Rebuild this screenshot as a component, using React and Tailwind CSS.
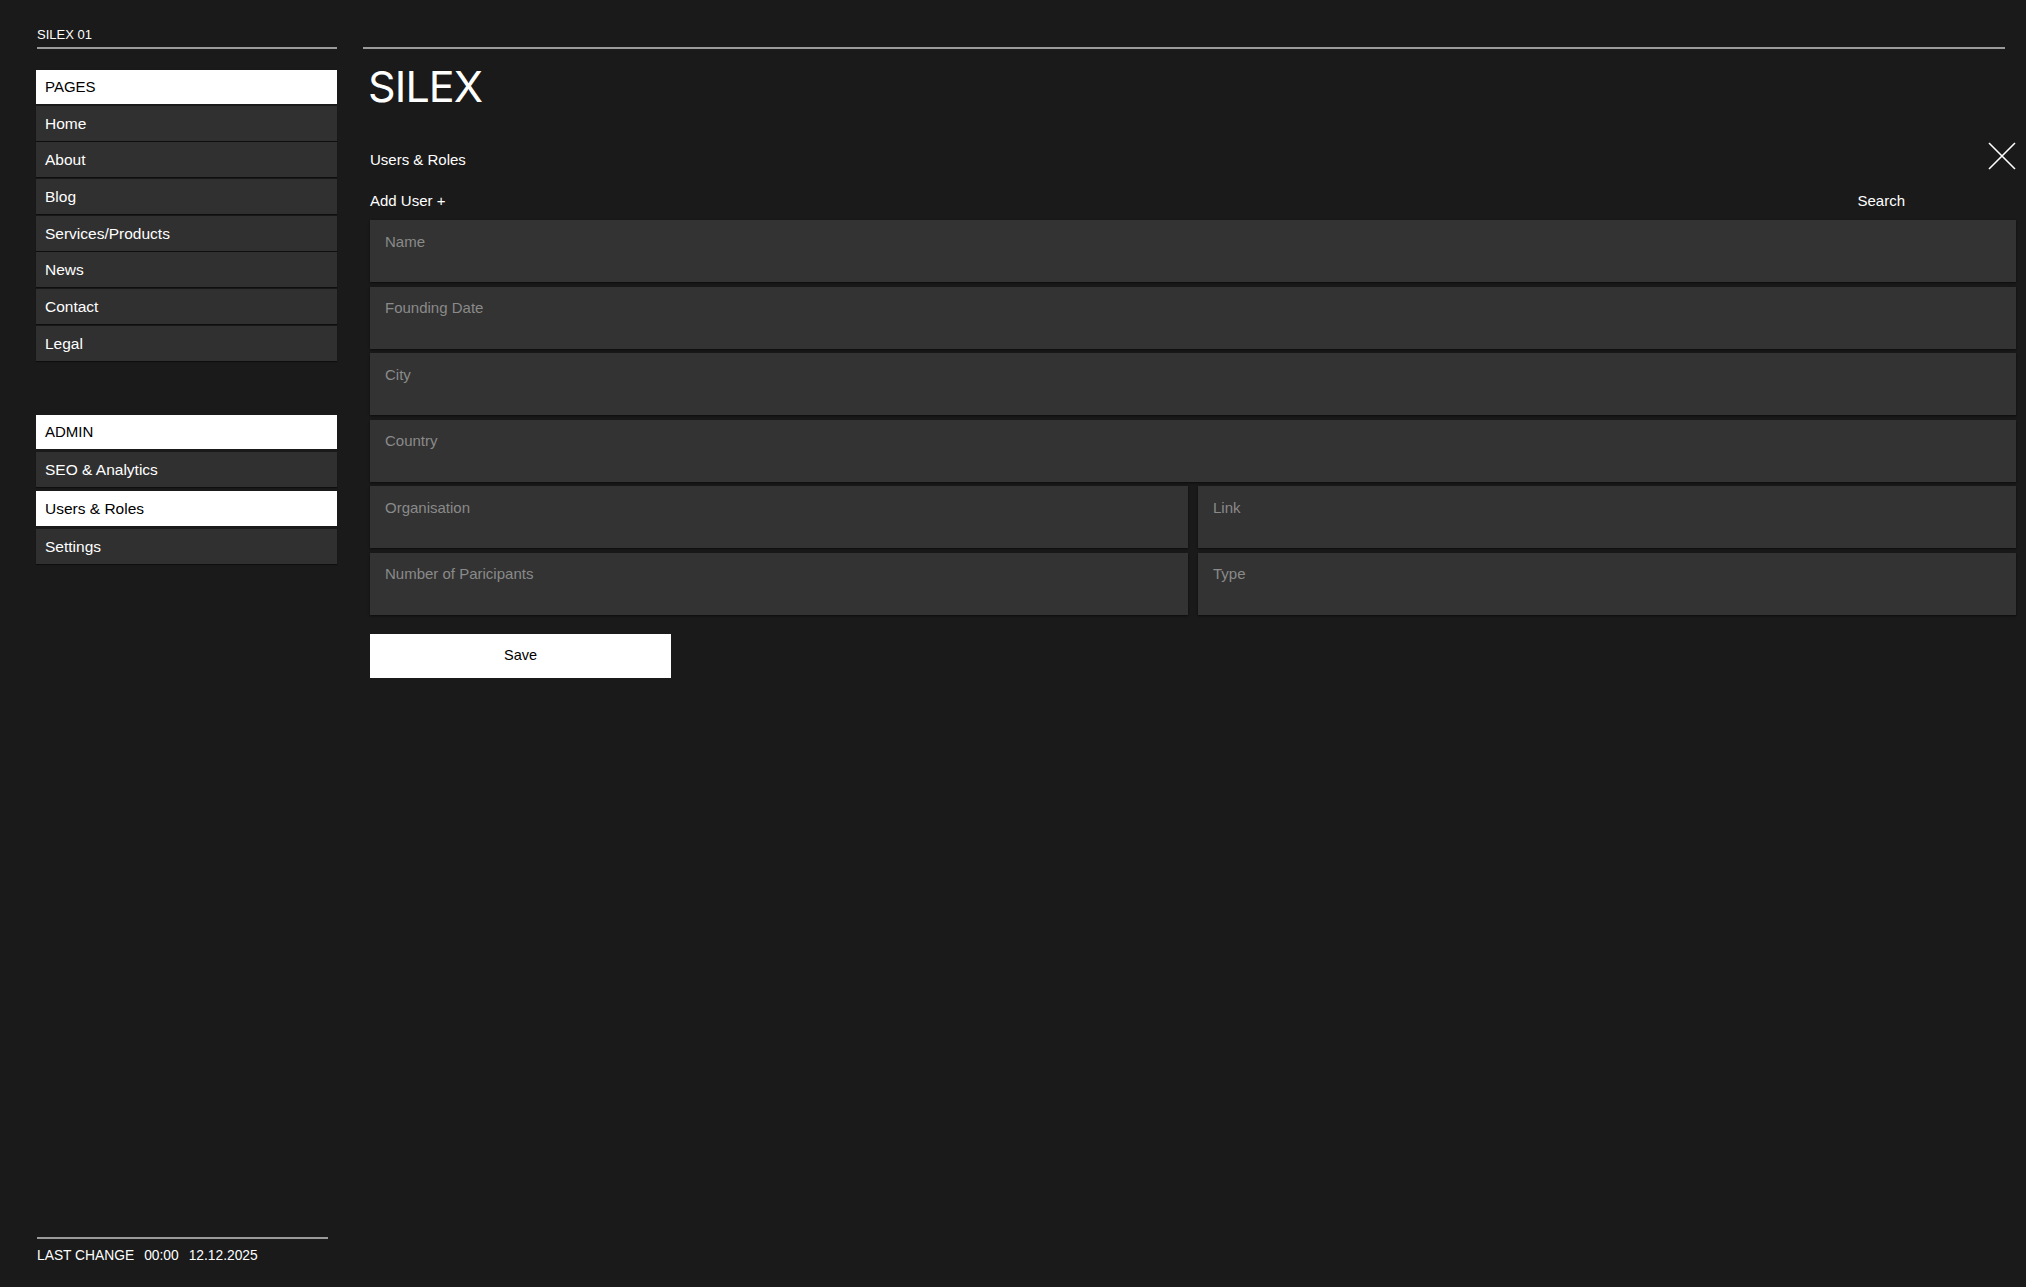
import { useState } from 'react';

const pages = ['Home', 'About', 'Blog', 'Services/Products', 'News', 'Contact', 'Legal'];
const admin = ['SEO & Analytics', 'Users & Roles', 'Settings'];

function NavHeader({ children }) {
  return (
    <div className="flex h-[34px] items-center bg-white pl-[9px] text-[15px] text-black">
      {children}
    </div>
  );
}

function NavItem({ label, active, onClick }) {
  return (
    <button
      onClick={onClick}
      className={
        active
          ? 'flex h-[35px] w-full items-center bg-white pl-[9px] text-left text-[15.5px] text-black'
          : 'flex h-[35px] w-full items-center bg-[#303030] pl-[9px] text-left text-[15.5px] text-white shadow-[0_1px_1px_rgba(0,0,0,0.45)]'
      }
    >
      {label}
    </button>
  );
}

function Field({ placeholder }) {
  return (
    <input
      placeholder={placeholder}
      className="h-[62px] w-full bg-[#333333] px-[15px] pb-[20px] text-[15px] text-white shadow-[0_1px_2px_rgba(0,0,0,0.55)] outline-none placeholder:text-[#8a8a8a]"
    />
  );
}

export default function App() {
  const [current, setCurrent] = useState('Users & Roles');

  return (
    <div className="flex min-h-screen bg-[#1a1a1a] font-['Liberation_Sans',Arial,sans-serif] text-white">
      <aside className="flex h-[1287px] w-[337px] shrink-0 flex-col pl-[36px]">
        <div className="pl-[1px] pt-[27px] text-[13px] leading-4">SILEX 01</div>
        <div className="ml-[1px] mt-[4px] h-[2px] bg-[#9a9a9a]" />

        <div className="mt-[21px] flex flex-col gap-[1.7px]">
          <NavHeader>PAGES</NavHeader>
          {pages.map((p) => (
            <NavItem key={p} label={p} active={current === p} onClick={() => setCurrent(p)} />
          ))}
        </div>

        <div className="mt-[54px] flex flex-col gap-[3.5px]">
          <NavHeader>ADMIN</NavHeader>
          {admin.map((p) => (
            <NavItem key={p} label={p} active={current === p} onClick={() => setCurrent(p)} />
          ))}
        </div>

        <div className="mt-auto pb-[23px] pl-[1px] pr-[9px]">
          <div className="h-[2px] bg-[#9a9a9a]" />
          <div className="mt-[9px] flex gap-[10px] text-[13.8px] leading-4">
            <span>LAST CHANGE</span>
            <span>00:00</span>
            <span>12.12.2025</span>
          </div>
        </div>
      </aside>

      <main className="flex-1 pl-[26px] pr-[10px]">
        <div className="mr-[11px] mt-[47px] h-[2px] bg-[#9a9a9a]" />
        <h1 className="mt-[15px] pl-[5px] font-['Inter',sans-serif] text-[43px] font-normal leading-[44px] tracking-[-0.02em]">
          SILEX
        </h1>

        <div className="pl-[7px]">
          <div className="mt-[34px] flex items-start justify-between">
            <div className="mt-[8px] text-[15px] leading-5">{current}</div>
            <button aria-label="Close" className="h-[28px] w-[28px]">
              <svg viewBox="0 0 28 28" className="h-[28px] w-[28px]" fill="none" stroke="white" strokeWidth="1.6">
                <path d="M1 1L27 27M27 1L1 27" />
              </svg>
            </button>
          </div>

          <div className="mt-[21px] flex items-center justify-between text-[15px] leading-5">
            <button>Add User +</button>
            <button className="mr-[111px]">Search</button>
          </div>

          <form className="mt-[9px] grid grid-cols-2 gap-x-[10px] gap-y-[4.5px]" onSubmit={(e) => e.preventDefault()}>
            <div className="col-span-2"><Field placeholder="Name" /></div>
            <div className="col-span-2"><Field placeholder="Founding Date" /></div>
            <div className="col-span-2"><Field placeholder="City" /></div>
            <div className="col-span-2"><Field placeholder="Country" /></div>
            <Field placeholder="Organisation" />
            <Field placeholder="Link" />
            <Field placeholder="Number of Paricipants" />
            <Field placeholder="Type" />
            <div className="col-span-2 mt-[14.5px]">
              <button type="submit" className="h-[44px] w-[301px] bg-white text-[14.5px] text-black">
                Save
              </button>
            </div>
          </form>
        </div>
      </main>
    </div>
  );
}
